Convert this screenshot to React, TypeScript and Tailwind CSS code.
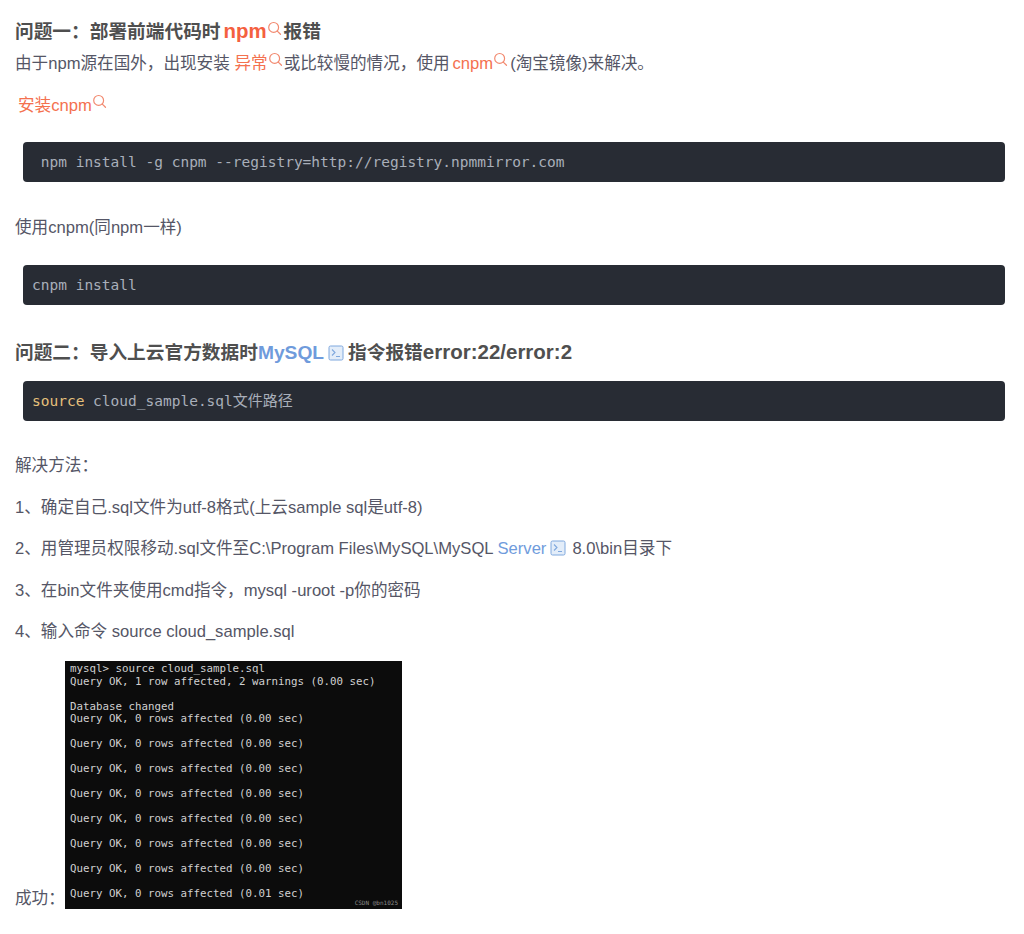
const SANS = 'font-["Liberation_Sans","Noto_Sans_CJK_SC",sans-serif]';
const COLON = '\uFF1A';
const COMMA = '\uFF0C';

function SearchMark() {
  return (
    <svg viewBox="0 0 14 14" className="mb-[10px] inline-block h-[15px] w-[15px] align-middle" fill="none" stroke="#f2896f" strokeWidth="1.1">
      <circle cx="6.2" cy="6" r="4.6" />
      <path d="M9.6 9.4l3 3" strokeLinecap="round" />
    </svg>
  );
}

function TermMark() {
  return (
    <svg viewBox="0 0 16 16" className="mx-[4px] inline-block h-[16px] w-[16px] align-[-2px]" fill="#e3edf9" stroke="#7fa8de" strokeWidth="1">
      <rect x="1" y="1" width="14" height="14" rx="1.5" />
      <path d="M4 4.5l3 3-3 3M8 11.5h4" fill="none" strokeWidth="1.1" />
    </svg>
  );
}

function Code({ children }: { children: React.ReactNode }) {
  return (
    <pre className='mx-[8px] flex h-10 items-center rounded-[4px] bg-[#282c34] pl-[9px] font-["DejaVu_Sans_Mono","Noto_Sans_CJK_SC",monospace] text-[14.5px] text-[#a9afba]'>
      {children}
    </pre>
  );
}

const QUERY = 'Query OK, 0 rows affected (0.00 sec)';

const TERMINAL = [
  'mysql> source cloud_sample.sql',
  'Query OK, 1 row affected, 2 warnings (0.00 sec)',
  '',
  'Database changed',
  QUERY, '', QUERY, '', QUERY, '', QUERY, '', QUERY, '', QUERY, '', QUERY, '',
  'Query OK, 0 rows affected (0.01 sec)',
];

export default function App() {
  return (
    <div className={`${SANS} h-[934px] w-[1024px] overflow-hidden bg-white pt-[18px] pl-[15px] pr-[11px] text-[16.6px] leading-[26px] text-[#555666]`}>
      <h2 className="mb-[7px] h-[26px] text-[18.7px] font-bold text-[#4f4f4f]">
        问题一{COLON}部署前端代码时<span className="ml-[3px] text-[20.4px] text-[#f4603f]">npm</span>
        <SearchMark />
        <span className="ml-[2px]">报错</span>
      </h2>
      <p className="mb-[16px] h-[26px]">
        由于npm源在国外{COMMA}出现安装 <span className="text-[#f4714f]">异常</span>
        <SearchMark />
        <span className="ml-[1px]">或比较慢的情况{COMMA}使用</span>
        <span className="ml-[3px] text-[#f4714f]">cnpm</span>
        <SearchMark />
        <span className="ml-[2px]">(淘宝镜像)来解决。</span>
      </p>
      <p className="mb-[23px] h-[26px] pl-[3px] text-[#f4714f]">
        安装cnpm
        <SearchMark />
      </p>
      <Code> npm install -g cnpm --registry=http://registry.npmmirror.com</Code>
      <p className="mt-[33px] mb-[24px] h-[26px]">使用cnpm(同npm一样)</p>
      <Code>cnpm install</Code>
      <h2 className="mt-[34px] mb-[16px] h-[26px] text-[18.7px] font-bold text-[#4f4f4f]">
        问题二{COLON}导入上云官方数据时<span className="text-[19.2px] text-[#6f9bdc]">MySQL</span>
        <TermMark />
        指令报错<span className="text-[20.5px]">error:22/error:2</span>
      </h2>
      <Code>
        <span className="text-[#e5c07b]">source</span> cloud_sample.sql<span className="text-[15px]">文件路径</span>
      </Code>
      <p className="mt-[32px] mb-[15.6px] h-[26px]">解决方法{COLON}</p>
      <p className="mb-[15.6px] h-[26px]">1、确定自己.sql文件为utf-8格式(上云sample sql是utf-8)</p>
      <p className="mb-[15.6px] h-[26px]">
        2、用管理员权限移动.sql文件至C:\Program Files\MySQL\MySQL <span className="text-[#6f9bdc]">Server</span>
        <TermMark />
        <span className="ml-[2px]">8.0\bin目录下</span>
      </p>
      <p className="mb-[15.6px] h-[26px]">3、在bin文件夹使用cmd指令{COMMA}mysql -uroot -p你的密码</p>
      <p className="mb-[16px] h-[26px]">4、输入命令 source cloud_sample.sql</p>
      <div className="flex items-end">
        <span className="w-[50px] leading-[20px]">成功{COLON}</span>
        <div className='relative h-[248px] w-[337px] overflow-hidden bg-[#0c0c0c] pt-[2px] pl-[5px] font-["DejaVu_Sans_Mono",monospace] text-[10.8px] leading-[12.5px] text-[#d0d0d0]'>
          {TERMINAL.map((line, i) => (
            <div key={i} className="h-[12.5px] whitespace-pre">
              {line}
            </div>
          ))}
          <span className="absolute right-[4px] bottom-[2px] text-[6px] leading-[8px] text-[#8a8a8a]">CSDN @bn1025</span>
        </div>
      </div>
    </div>
  );
}
